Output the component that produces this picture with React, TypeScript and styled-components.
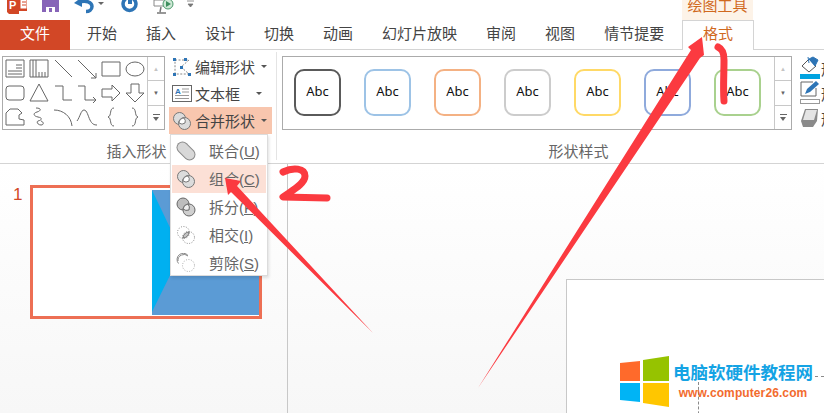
import styled, { createGlobalStyle } from 'styled-components';

const CJK = `"Liberation Sans", "Noto Sans CJK SC", sans-serif`;

const GlobalStyle = createGlobalStyle`
  html, body {
    margin: 0;
    padding: 0;
    background: #fff;
  }
  * {
    box-sizing: border-box;
  }
`;

const TABS = ['开始', '插入', '设计', '切换', '动画', '幻灯片放映', '审阅', '视图', '情节提要'];
const SWATCHES = ['#5a5a5a', '#9dc3e6', '#f4b183', '#cccccc', '#ffd966', '#8faadc', '#a9d18e'];

const Line = (d: string, key: number) => <path key={key} d={d} />;

// gallery shapes, all on a 24 box
const SHAPES: string[][] = [
  ['M3 3h18v17H3z', 'M13 8h6M13 11h6M5 14h14M5 17h14'],
  ['M3 3h18v17H3z', 'M6 3v17M9 3v17M12 15v5M15 15v5M18 15v5'],
  ['M4 3l17 17'],
  ['M3 3l18 18', 'M21 16v5h-5'],
  ['M3 5h18v14H3z'],
  ['M3 12a9 7 0 1 0 18 0a9 7 0 1 0-18 0'],
  ['M6 5h12a3 3 0 0 1 3 3v8a3 3 0 0 1-3 3H6a3 3 0 0 1-3-3V8a3 3 0 0 1 3-3z'],
  ['M12 3l9 17H3z'],
  ['M4 5h8v14h9'],
  ['M3 5h7v14h11', 'M18 16l3 3-3 3'],
  ['M3 8h10V4l8 8-8 8v-4H3z'],
  ['M8 3h8v9h5l-9 9-9-9h5z'],
  ['M3 8l4-4h8l4 4-3 2v4l5 1v5H3z'],
  ['M9 3c6 0 5 3 1 4s-4 4 1 5 4 3 0 4c-2 1 0 4 3 4s3-3 0-4'],
  ['M3 5c9 0 17 6 18 16'],
  ['M2 16c3-4 4-11 7-11s4 6 6 10 4 5 7 5'],
  ['M15 3c-5 0-2 8-6 9 4 1 1 9 6 9'],
  ['M9 3c5 0 2 8 6 9-4 1-1 9-6 9'],
];

const MENU = [
  { name: '联合', key: 'U', kind: 'union' },
  { name: '组合', key: 'C', kind: 'combine' },
  { name: '拆分', key: 'F', kind: 'split' },
  { name: '相交', key: 'I', kind: 'intersect' },
  { name: '剪除', key: 'S', kind: 'subtract' },
];

const MergeGlyph = ({ kind }: { kind: string }) => (
  <svg width="20" height="20" viewBox="0 0 20 20">
    {kind === 'union' && (
      <>
        <path d="M6.500 6.500L13.500 13.500" stroke="#8a8a8a" strokeWidth="12" strokeLinecap="round" />
        <path d="M6.500 6.500L13.500 13.500" stroke="#d8d8d8" strokeWidth="10" strokeLinecap="round" />
      </>
    )}
    {kind === 'combine' && (
      <>
        <circle cx="7.500" cy="7.500" r="6" fill="#dcdcdc" stroke="#777" />
        <circle cx="12.500" cy="12.500" r="6" fill="#dcdcdc" stroke="#777" />
        <path d="M7 12a5 5 0 0 1 5-5 5 5 0 0 1 1 5 5 5 0 0 1-6 0z" fill="#fff" stroke="#777" />
      </>
    )}
    {kind === 'split' && (
      <>
        <circle cx="7" cy="7" r="6" fill="#bdbdbd" stroke="#666" />
        <circle cx="13" cy="13" r="6" fill="#cfcfcf" stroke="#666" />
        <path d="M7 12a6 6 0 0 1 5-5 6 6 0 0 1 1 6 6 6 0 0 1-6-1z" fill="#eee" stroke="#666" />
      </>
    )}
    {kind === 'intersect' && (
      <>
        <circle cx="7.500" cy="7.500" r="6" fill="none" stroke="#888" strokeDasharray="1 1.500" />
        <circle cx="12.500" cy="12.500" r="6" fill="none" stroke="#888" strokeDasharray="1 1.500" />
        <path d="M7 13a6 6 0 0 1 6-6 6 6 0 0 1-6 6z" fill="#c4c4c4" stroke="#777" />
      </>
    )}
    {kind === 'subtract' && (
      <>
        <path d="M12 2.500a6 6 0 1 0-9.500 8" fill="none" stroke="#888" />
        <path d="M2 8a6 6 0 0 1 10-5" fill="none" stroke="#888" />
        <circle cx="12.500" cy="12.500" r="6" fill="none" stroke="#aaa" strokeDasharray="1 1.500" />
      </>
    )}
  </svg>
);

const TextBoxGlyph = () => (
  <svg width="20" height="18" viewBox="0 0 20 18">
    <rect x="0.500" y="0.500" width="19" height="16" fill="#fff" stroke="#666" />
    <text x="3" y="9" fontSize="8" fontWeight="700" fill="#2e75b6" fontFamily="Liberation Sans, sans-serif">
      A
    </text>
    <path d="M10 4h7M10 7h7M3 10.500h14M3 13.500h14" stroke="#999" />
  </svg>
);

const EditShapeGlyph = () => (
  <svg width="20" height="20" viewBox="0 0 20 20">
    <path d="M3 3h14L9 10l8 7H3z" fill="none" stroke="#888" strokeDasharray="2 1.500" />
    <g fill="#2e75b6">
      <rect x="1" y="1" width="3" height="3" />
      <rect x="12" y="1" width="3" height="3" />
      <rect x="1" y="16" width="3" height="3" />
      <rect x="16" y="16" width="3" height="3" />
      <rect x="8" y="9" width="3" height="3" />
    </g>
  </svg>
);

const Bucket = () => (
  <svg width="20" height="24" viewBox="0 0 20 24">
    <path d="M2 10l7-7 7 7-7 6z" fill="#fff" stroke="#555" />
    <path d="M8 1l1 6M9 3l6 7 3-6-5-3z" fill="#2e75b6" stroke="#2e75b6" />
    <rect x="0" y="18" width="20" height="5" fill="#00a3e0" />
  </svg>
);

const Pen = () => (
  <svg width="20" height="24" viewBox="0 0 20 24">
    <path d="M1 1h12M1 1v14h15v-8" fill="none" stroke="#666" />
    <path d="M5 13l2-5L16 0l3 3-9 8z" fill="#2e75b6" />
    <rect x="0.500" y="18.500" width="19" height="4" fill="#fff" stroke="#999" />
  </svg>
);

const Eraser = () => (
  <svg width="20" height="20" viewBox="0 0 20 20">
    <path d="M5 1h13l-1 12-4 6H3l-2-6z" fill="#8a8a8a" />
    <path d="M6 2h11l-3 10H3z" fill="#e4e4e4" />
  </svg>
);

const QuickAccess = () => (
  <Quick>
    <svg width="20" height="20" viewBox="0 0 20 20">
      <path d="M0 0h20v11H12v3L2 14 0 12z" fill="#d24726" />
      <path d="M13 -1h7v10h-7z" fill="#fff" stroke="#d24726" />
      <path d="M15 2h4M15 5h4" stroke="#d24726" />
      <text x="2" y="9" fontSize="11" fontWeight="700" fill="#fff" fontFamily="Liberation Sans, sans-serif">
        P
      </text>
    </svg>
    <svg width="17" height="20" viewBox="0 0 17 20">
      <path d="M0 0h17v12H0z" fill="#8764b8" />
      <path d="M4 7h9v5H4z" fill="#fff" />
      <path d="M7 8h3v4H7z" fill="#8764b8" />
    </svg>
    <svg width="21" height="20" viewBox="0 0 21 20">
      <path d="M0 3L8 -3v10z" fill="#2e75b6" />
      <path d="M5 2C12 0 18 2 18 6.500C18 10 15 11.500 12 11.500" fill="none" stroke="#2e75b6" strokeWidth="3.500" />
    </svg>
    <svg width="6" height="20" viewBox="0 0 6 20">
      <path d="M0 2h6L3 5z" fill="#666" />
    </svg>
    <svg width="17" height="20" viewBox="0 0 17 20">
      <circle cx="8.500" cy="4" r="6.500" fill="none" stroke="#2e75b6" strokeWidth="3.500" />
      <path d="M6 -1h5v6H6z" fill="#fff" />
      <path d="M7 -1h4v5H7z" fill="#2e75b6" />
    </svg>
    <svg width="21" height="20" viewBox="0 0 21 20">
      <path d="M1 0h12M1 0v6h14" fill="none" stroke="#888" />
      <circle cx="15" cy="4" r="5" fill="#cfe8d6" stroke="#4a9a6b" />
      <path d="M13 1l5 3-5 3z" fill="#3d8f5e" />
      <path d="M8 7l-1 5M4 13h9" stroke="#777" strokeWidth="1.500" />
    </svg>
    <svg width="9" height="20" viewBox="0 0 9 20">
      <path d="M1 1h7M2 4h5l-2.500 3z" fill="#777" stroke="#777" strokeWidth="0.800" />
    </svg>
  </Quick>
);

const App = () => (
  <Page>
    <GlobalStyle />
    <TopBar>
      <QuickAccess />
      <ToolsLabel>绘图工具</ToolsLabel>
    </TopBar>

    <TabBar>
      <FileTab>文件</FileTab>
      <TabList>
        {TABS.map((t) => (
          <Tab key={t}>{t}</Tab>
        ))}
      </TabList>
      <FormatTab>格式</FormatTab>
    </TabBar>

    <Ribbon>
      <ShapesGroup>
        <GroupBody>
          <Gallery>
            <ShapeGrid>
              {SHAPES.map((paths, i) => (
                <ShapeCell key={i}>
                  <ShapeSvg viewBox="0 0 24 24">{paths.map(Line)}</ShapeSvg>
                </ShapeCell>
              ))}
            </ShapeGrid>
            <ScrollCol>
              <ScrollBtn $dim>▲</ScrollBtn>
              <ScrollBtn>▼</ScrollBtn>
              <ScrollBtn>
                <MoreIcon />
              </ScrollBtn>
            </ScrollCol>
          </Gallery>
          <Commands>
            <Command>
              <EditShapeGlyph />
              <span>编辑形状</span>
              <Caret />
            </Command>
            <Command>
              <TextBoxGlyph />
              <span>文本框</span>
              <WideCaret />
            </Command>
            <Command $active>
              <MergeGlyph kind="combine" />
              <span>合并形状</span>
              <Caret />
              <Menu>
                {MENU.map((m) => (
                  <MenuItem key={m.key} $active={m.kind === 'combine'}>
                    <MergeGlyph kind={m.kind} />
                    <MenuText>
                      {m.name}(<u>{m.key}</u>)
                    </MenuText>
                  </MenuItem>
                ))}
              </Menu>
            </Command>
          </Commands>
        </GroupBody>
        <GroupLabel>插入形状</GroupLabel>
      </ShapesGroup>

      <StylesGroup>
        <GroupBody>
          <StyleGallery>
            <SwatchRow>
              {SWATCHES.map((c) => (
                <Swatch key={c} $color={c}>
                  Abc
                </Swatch>
              ))}
            </SwatchRow>
            <ScrollCol>
              <ScrollBtn $dim>▲</ScrollBtn>
              <ScrollBtn>▼</ScrollBtn>
              <ScrollBtn>
                <MoreIcon />
              </ScrollBtn>
            </ScrollCol>
          </StyleGallery>
          <SideCommands>
            <SideCommand>
              <Bucket />
              <span>形状填充</span>
            </SideCommand>
            <SideCommand>
              <Pen />
              <span>形状轮廓</span>
            </SideCommand>
            <SideCommand>
              <Eraser />
              <span>形状效果</span>
            </SideCommand>
          </SideCommands>
        </GroupBody>
        <GroupLabel>形状样式</GroupLabel>
      </StylesGroup>
    </Ribbon>

    <Workspace>
      <ThumbPane>
        <SlideNumber>1</SlideNumber>
        <Thumb>
          <ThumbArt viewBox="0 0 106 125" preserveAspectRatio="none">
            <rect width="106" height="125" fill="#5b9bd5" />
            <path d="M0 0L17 36L30 60L17 87L0 122z" fill="#00b0f0" />
          </ThumbArt>
        </Thumb>
      </ThumbPane>
      <EditPane>
        <Canvas>
          <GuideV />
          <GuideH />
        </Canvas>
      </EditPane>
    </Workspace>

    <Watermark>
      <svg width="50" height="52" viewBox="0 0 50 52">
        <path d="M0 7l20-2v20H0z" fill="#ff6a2b" />
        <path d="M23 4L49 0v25H23z" fill="#96c300" />
        <path d="M0 27h20v19L0 44z" fill="#00b4f5" />
        <path d="M23 27h26v24l-26-4z" fill="#ffc600" />
      </svg>
      <WatermarkText>
        <WatermarkTitle>电脑软硬件教程网</WatermarkTitle>
        <WatermarkUrl>www.computer26.com</WatermarkUrl>
      </WatermarkText>
    </Watermark>

    {/* red marks drawn over the screenshot */}
    <Marks viewBox="0 0 824 413">
      <path d="M702 37L688 47L691 50L478 388L700 58L704 55z" fill="#fb3a40" />
      <path d="M225 178L241 181L237 186L373 333L231 192L228 195z" fill="#fb3a40" />
      <g fill="none" stroke="#fb3a40" strokeLinecap="round" strokeLinejoin="round">
        <path d="M718 47C722 49 724 52 724 60C724 75 723 88 724 101" strokeWidth="7" />
        <path d="M283 172C293 167 305 168 305 176C305 184 291 191 283 197L327 198" strokeWidth="7" />
      </g>
    </Marks>
  </Page>
);

export default App;

/* ---------------- styled-components ---------------- */

const Page = styled.div`
  position: relative;
  width: 824px;
  height: 413px;
  overflow: hidden;
  background: #fff;
  font-family: ${CJK};
  color: #444;
`;

const TopBar = styled.div`
  height: 20px;
  display: flex;
`;

const Quick = styled.div`
  width: 682px;
  padding-left: 7px;
  height: 20px;
  display: flex;
  overflow: hidden;

  svg:nth-child(1) { margin-right: 15px; }
  svg:nth-child(2) { margin-right: 15px; }
  svg:nth-child(3) { margin-right: 3px; }
  svg:nth-child(4) { margin-right: 17px; }
  svg:nth-child(5) { margin-right: 15px; }
  svg:nth-child(6) { margin-right: 12px; }
`;

const ToolsLabel = styled.div`
  width: 71px;
  height: 20px;
  overflow: hidden;
  background: #fdf3e8;
  color: #d0691f;
  font-size: 15px;
  line-height: 11px;
  text-align: center;
`;

const TabBar = styled.div`
  position: relative;
  height: 30px;
  display: flex;
  border-bottom: 1px solid #d4d4d4;
`;

const FileTab = styled.div`
  width: 70px;
  height: 30px;
  background: #d24726;
  color: #fff;
  font-size: 15px;
  line-height: 28px;
  text-align: center;
`;

const TabList = styled.div`
  width: 612px;
  padding-left: 17px;
  display: flex;
  gap: 29px;
`;

const Tab = styled.div`
  font-size: 15px;
  line-height: 27px;
  color: #444;
  white-space: nowrap;
`;

const FormatTab = styled.div`
  width: 72px;
  height: 30px;
  background: #fff;
  border: 1px solid #d4d4d4;
  border-bottom: none;
  color: #d0691f;
  font-size: 15px;
  line-height: 25px;
  text-align: center;
`;

const Ribbon = styled.div`
  height: 114px;
  display: flex;
  border-bottom: 1px solid #d4d4d4;
`;

const ShapesGroup = styled.div`
  flex: none;
  width: 277px;
  border-right: 1px solid #e4e4e4;
  margin: 2px 0 3px;
  display: flex;
  flex-direction: column;
`;

const StylesGroup = styled.div`
  flex: none;
  width: 606px;
  margin-top: 2px;
  display: flex;
  flex-direction: column;
`;

const GroupBody = styled.div`
  height: 92px;
  display: flex;
`;

const GroupLabel = styled.div`
  padding-right: 3px;
  font-size: 15px;
  line-height: 16px;
  color: #666;
  text-align: center;
`;

const Gallery = styled.div`
  margin: 4px 0 0 2px;
  width: 163px;
  height: 74px;
  border: 1px solid #ababab;
  display: flex;
`;

const ShapeGrid = styled.div`
  flex: 1;
  display: grid;
  grid-template-columns: repeat(6, 24px);
  grid-auto-rows: 24px;
`;

const ShapeCell = styled.div`
  display: flex;
  align-items: center;
  justify-content: center;
`;

const ShapeSvg = styled.svg`
  width: 24px;
  height: 24px;
  fill: none;
  stroke: #666;
  stroke-width: 1;
`;

const ScrollCol = styled.div`
  flex: none;
  width: 17px;
  border-left: 1px solid #c8c8c8;
  display: flex;
  flex-direction: column;
`;

const ScrollBtn = styled.div<{ $dim?: boolean }>`
  flex: 1;
  display: flex;
  align-items: center;
  justify-content: center;
  font-size: 6px;
  color: ${({ $dim }) => ($dim ? '#c4c4c4' : '#666')};

  & + & {
    border-top: 1px solid #c8c8c8;
  }
`;

const MoreIcon = styled.span`
  width: 7px;
  height: 7px;
  border-top: 1px solid #666;
  position: relative;

  &::after {
    content: '';
    position: absolute;
    top: 2px;
    left: 0;
    border: 3.500px solid transparent;
    border-top: 4px solid #666;
    border-bottom: none;
  }
`;

const Commands = styled.div`
  margin: 1px 0 0 4px;
  width: 103px;
  display: flex;
  flex-direction: column;
`;

const Command = styled.div<{ $active?: boolean }>`
  position: relative;
  height: 27px;
  padding-left: 3px;
  display: flex;
  align-items: center;
  gap: 3px;
  font-size: 15px;
  color: #444;
  background: ${({ $active }) => ($active ? '#f8c6ae' : 'transparent')};
`;

const Caret = styled.span`
  margin-left: 3px;
  border: 3px solid transparent;
  border-top: 3.500px solid #555;
  border-bottom: none;
`;

const WideCaret = styled(Caret)`
  margin-left: 13px;
`;

const Menu = styled.div`
  position: absolute;
  top: 27px;
  left: 1px;
  z-index: 2;
  width: 98px;
  height: 142px;
  padding: 2px 1px;
  background: #fff;
  border: 1px solid #dcdcdc;
  box-shadow: 1px 2px 3px rgba(0, 0, 0, 0.12);
`;

const MenuItem = styled.div<{ $active?: boolean }>`
  height: 28px;
  padding-left: 4px;
  display: flex;
  align-items: center;
  gap: 13px;
  background: ${({ $active }) => ($active ? '#fce0d6' : 'transparent')};
`;

const MenuText = styled.span`
  padding-bottom: 2px;
  font-size: 15px;
  color: #666;
  white-space: nowrap;
`;

const StyleGallery = styled.div`
  margin: 4px 0 0 5px;
  width: 510px;
  height: 74px;
  border: 1px solid #ababab;
  display: flex;
`;

const SwatchRow = styled.div`
  flex: 1;
  padding: 12px 0 0 11px;
  display: flex;
  gap: 23px;
`;

const Swatch = styled.div<{ $color: string }>`
  width: 47px;
  height: 47px;
  padding-bottom: 3px;
  border: 2px solid ${({ $color }) => $color};
  border-radius: 10px;
  display: flex;
  align-items: center;
  justify-content: center;
  font-family: 'Noto Sans', sans-serif;
  font-size: 13px;
  color: #111;
`;

const SideCommands = styled.div`
  margin: 4px 0 0 8px;
  display: flex;
  flex-direction: column;
  gap: 1px;
`;

const SideCommand = styled.div`
  height: 24px;
  display: flex;
  align-items: center;
  gap: 1px;
  font-size: 15px;
  color: #444;
  white-space: nowrap;
`;

const Workspace = styled.div`
  height: 249px;
  display: flex;
  background: linear-gradient(#fff, #f7f7f7);
`;

const ThumbPane = styled.div`
  flex: none;
  width: 288px;
  padding: 21px 0 0 13px;
  border-right: 1px solid #c8c8c8;
  display: flex;
  align-items: flex-start;
`;

const SlideNumber = styled.div`
  width: 17px;
  font-size: 17px;
  line-height: 20px;
  color: #d24726;
`;

const Thumb = styled.div`
  width: 232px;
  height: 134px;
  padding: 2px 1px 1px 119px;
  border: 3px solid #ed6f54;
  background: #fff;
`;

const ThumbArt = styled.svg`
  display: block;
  width: 107px;
  height: 125px;
`;

const EditPane = styled.div`
  flex: 1;
  padding: 115px 0 0 278px;
`;

const Canvas = styled.div`
  position: relative;
  height: 150px;
  background: #fff;
  border-top: 1px solid #c8c8c8;
  border-left: 1px solid #c8c8c8;
`;

const GuideV = styled.div`
  position: absolute;
  left: 131px;
  top: 102px;
  bottom: 0;
  border-left: 1px dashed #8a8a8a;
`;

const GuideH = styled.div`
  position: absolute;
  left: 248px;
  right: 0;
  top: 96px;
  border-top: 1px dashed #8a8a8a;
`;

const Watermark = styled.div`
  position: absolute;
  left: 620px;
  top: 356px;
  display: flex;
  gap: 3px;
`;

const WatermarkText = styled.div`
  display: flex;
  flex-direction: column;
  align-items: center;
  padding-top: 7px;
`;

const WatermarkTitle = styled.div`
  font-size: 17.500px;
  line-height: 21px;
  font-weight: 700;
  color: #14a3e4;
  white-space: nowrap;
`;

const WatermarkUrl = styled.div`
  margin-top: 2px;
  font-size: 12px;
  line-height: 15px;
  font-weight: 700;
  letter-spacing: 0.100px;
  color: #f26b2e;
  white-space: nowrap;
`;

const Marks = styled.svg`
  position: absolute;
  inset: 0;
  width: 824px;
  height: 413px;
  z-index: 3;
  pointer-events: none;
`;
